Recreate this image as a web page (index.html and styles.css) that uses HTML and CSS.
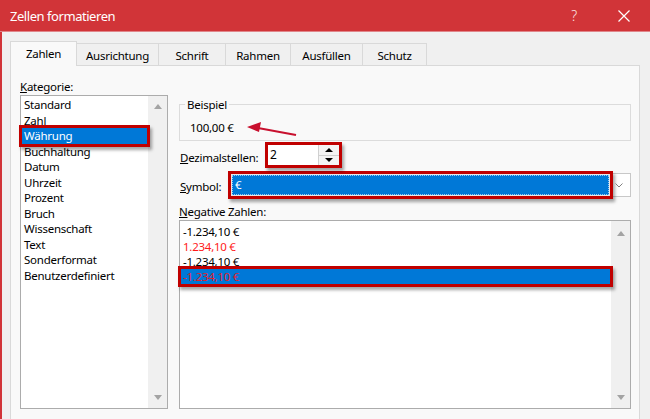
FILE: index.html
```html
<!DOCTYPE html>
<html lang="de">
<head>
<meta charset="utf-8">
<title>Zellen formatieren</title>
<link rel="stylesheet" href="styles.css">
</head>
<body>
<div class="window">
  <div class="titlebar">
    <span class="title">Zellen formatieren</span>
    <span class="tb-btn help">?</span>
    <span class="tb-btn close">
      <svg width="12" height="12" viewBox="0 0 12 12"><path d="M0.5 0.5 L11.5 11.5 M11.5 0.5 L0.5 11.5" stroke="#fff" stroke-width="1.2" fill="none"/></svg>
    </span>
  </div>
  <div class="body">
    <div class="tabs">
      <div class="tab active w-zahlen">Zahlen</div>
      <div class="tab w-ausr">Ausrichtung</div>
      <div class="tab w-schrift">Schrift</div>
      <div class="tab w-rahmen">Rahmen</div>
      <div class="tab w-ausf">Ausfüllen</div>
      <div class="tab w-schutz">Schutz</div>
    </div>
    <div class="panel">
      <div class="col-left">
        <div class="label"><u>K</u>ategorie:</div>
        <div class="listbox cat">
          <div class="items">
            <div class="item">Standard</div>
            <div class="item">Zahl</div>
            <div class="item selected hl">Währung</div>
            <div class="item">Buchhaltung</div>
            <div class="item">Datum</div>
            <div class="item">Uhrzeit</div>
            <div class="item">Prozent</div>
            <div class="item">Bruch</div>
            <div class="item">Wissenschaft</div>
            <div class="item">Text</div>
            <div class="item">Sonderformat</div>
            <div class="item">Benutzerdefiniert</div>
          </div>
          <div class="vscroll"><span class="arr up"></span><span class="arr down"></span></div>
        </div>
      </div>
      <div class="col-right">
        <fieldset class="sample">
          <legend>Beispiel</legend>
          <div class="sample-value">100,00 €</div>
        </fieldset>
        <div class="row dec">
          <label class="row-label"><u>D</u>ezimalstellen:</label>
          <div class="spinner hl">
            <span class="spin-value">2</span>
            <span class="spin-btns">
              <span class="spin-btn"><span class="tri up-b"></span></span>
              <span class="spin-btn"><span class="tri down-b"></span></span>
            </span>
          </div>
        </div>
        <div class="row sym">
          <label class="row-label"><u>S</u>ymbol:</label>
          <div class="combo">
            <div class="combo-value hl2">€</div>
            <div class="combo-btn">
              <svg width="8" height="5" viewBox="0 0 8 5"><polyline points="0.5,0.5 4,4 7.5,0.5" fill="none" stroke="#808080" stroke-width="1"/></svg>
            </div>
          </div>
        </div>
        <div class="label neg-label"><u>N</u>egative Zahlen:</div>
        <div class="listbox neg">
          <div class="items">
            <div class="item">-1.234,10 €</div>
            <div class="item red">1.234,10 €</div>
            <div class="item">-1.234,10 €</div>
            <div class="item selected red hl">-1.234,10 €</div>
          </div>
          <div class="vscroll"><span class="arr up"></span><span class="arr down"></span></div>
        </div>
      </div>
    </div>
  </div>
  <svg class="annot-arrow" width="650" height="419" viewBox="0 0 650 419">
    <line x1="296" y1="135" x2="258" y2="128" stroke="#c8102e" stroke-width="2"/>
    <polygon points="247,127 261,122 259,132" fill="#c8102e"/>
  </svg>
</div>
</body>
</html>
```
FILE: styles.css
```css
* { box-sizing: border-box; }
html, body { margin: 0; padding: 0; }
body {
  width: 650px;
  height: 419px;
  overflow: hidden;
  background: #f0f0f0;
  font-family: "Noto Sans", "Segoe UI", sans-serif;
  font-size: 11.5px;
  letter-spacing: -0.25px;
  color: #000;
}
.window {
  position: relative;
  width: 650px;
  height: 419px;
  display: flex;
  flex-direction: column;
}
.titlebar {
  flex: none;
  height: 32px;
  background: #d13438;
  color: #fff;
  display: flex;
  align-items: center;
  padding: 0 3px 0 10px;
  gap: 4px;
  border-bottom: 1px solid #e0868a;
}
.title { flex: 1; font-size: 13px; letter-spacing: -0.45px; }
.tb-btn {
  width: 46px;
  display: flex;
  justify-content: center;
  align-items: center;
}
.help { font-size: 14px; font-weight: 300; color: #fbe3e3; }
.body {
  flex: 1;
  border-left: 2px solid #d13438;
  padding: 9px 0 0 8px;
}
.tabs {
  display: flex;
  align-items: flex-end;
  height: 24px;
  position: relative;
  z-index: 1;
}
.tab {
  height: 22px;
  border: 1px solid #d9d9d9;
  border-bottom: none;
  margin-left: -1px;
  display: flex;
  align-items: center;
  justify-content: center;
  background: #f0f0f0;
  padding-top: 1px;
}
.tab.active {
  height: 25px;
  margin-left: 0;
  margin-bottom: -1px;
  background: #f9f9f9;
  padding-top: 0;
  padding-bottom: 2px;
}
.w-zahlen { width: 67px; }
.w-ausr { width: 83px; }
.w-schrift { width: 68px; }
.w-rahmen { width: 66px; }
.w-ausf { width: 73px; }
.w-schutz { width: 65px; }

.panel {
  width: 630px;
  height: 360px;
  border: 1px solid #d9d9d9;
  background: #f9f9f9;
  display: flex;
  gap: 11px;
  padding: 13px 0 0 9px;
}
.col-left { width: 148px; display: flex; flex-direction: column; }
.col-right { width: 452px; display: flex; flex-direction: column; }
.label { line-height: 15px; height: 15px; }

.listbox {
  border: 1px solid #acacac;
  background: #fff;
  display: flex;
}
.items { flex: 1; }
.item { padding-left: 2px; margin: 0 1px; white-space: nowrap; }
.item.selected { background: #0078d7; color: #fff; }
.item.red { color: #ff1a1a; }
.item.selected.red { color: #e0202e; }
.hl {
  position: relative;
  box-shadow: 0 0 0 3px #c00000, 2px 3px 3px 3px rgba(0, 0, 0, 0.35);
}
.hl2 {
  box-shadow: 0 0 0 1px #e8e8e8, 0 0 0 4px #c00000, 2px 3px 3px 4px rgba(0, 0, 0, 0.35);
}

.cat { margin-top: 1px; height: 314px; }
.cat .items { padding-top: 1px; }
.cat .item { height: 15.5px; line-height: 15.5px; }

.vscroll {
  width: 19px;
  background: #f0f0f0;
  display: flex;
  flex-direction: column;
  justify-content: space-between;
  align-items: center;
  padding: 8px 0;
}
.neg .vscroll { padding: 10px 0 8px; }
.arr { width: 0; height: 0; border-left: 4.5px solid transparent; border-right: 4.5px solid transparent; }
.arr.up { border-bottom: 5px solid #a3a3a3; }
.arr.down { border-top: 5px solid #a3a3a3; }

.sample {
  margin: 18px 0 0;
  padding: 8px 10px 5px;
  border: 1px solid #dcdcdc;
  min-width: 0;
}
.sample legend {
  margin-left: -5px;
  padding: 0 2px;
  line-height: 15px;
}
.sample-value { line-height: 15px; }

.row { display: flex; align-items: flex-start; }
.row-label { padding-left: 1px; line-height: 15px; }
.dec { margin-top: 4px; }
.dec .row-label { width: 89px; padding-top: 5px; }
.sym { margin-top: 8px; }
.sym .row-label { width: 51px; padding-top: 6px; }

.spinner {
  width: 71px;
  height: 20px;
  background: #fff;
  display: flex;
}
.spin-value { flex: 1; padding-left: 2px; line-height: 20px; font-size: 12px; }
.spin-btns {
  width: 21px;
  display: flex;
  flex-direction: column;
  border-left: 1px solid #d0d0d0;
}
.spin-btn {
  flex: 1;
  display: flex;
  align-items: center;
  justify-content: center;
  background: #f4f4f4;
}
.spin-btn + .spin-btn { border-top: 1px solid #d0d0d0; }
.tri { width: 0; height: 0; border-left: 4px solid transparent; border-right: 4px solid transparent; }
.tri.up-b { border-bottom: 4px solid #000; }
.tri.down-b { border-top: 4px solid #000; }

.combo {
  width: 401px;
  height: 24px;
  border: 1px solid #c8c8c8;
  background: #fff;
  display: flex;
  padding: 1px;
}
.combo-value {
  flex: 1;
  background: #0078d7;
  color: #fff;
  border: 1px dotted #9cc6ee;
  padding-left: 2px;
  line-height: 18px;
}
.combo-btn {
  width: 20px;
  display: flex;
  align-items: center;
  justify-content: center;
}

.neg-label { margin-top: 7px; }
.neg { margin-top: 1px; height: 189px; }
.neg .items { padding-top: 3px; }
.neg .item { height: 15px; line-height: 15px; }

.annot-arrow {
  position: absolute;
  left: 0;
  top: 0;
  pointer-events: none;
}
```
